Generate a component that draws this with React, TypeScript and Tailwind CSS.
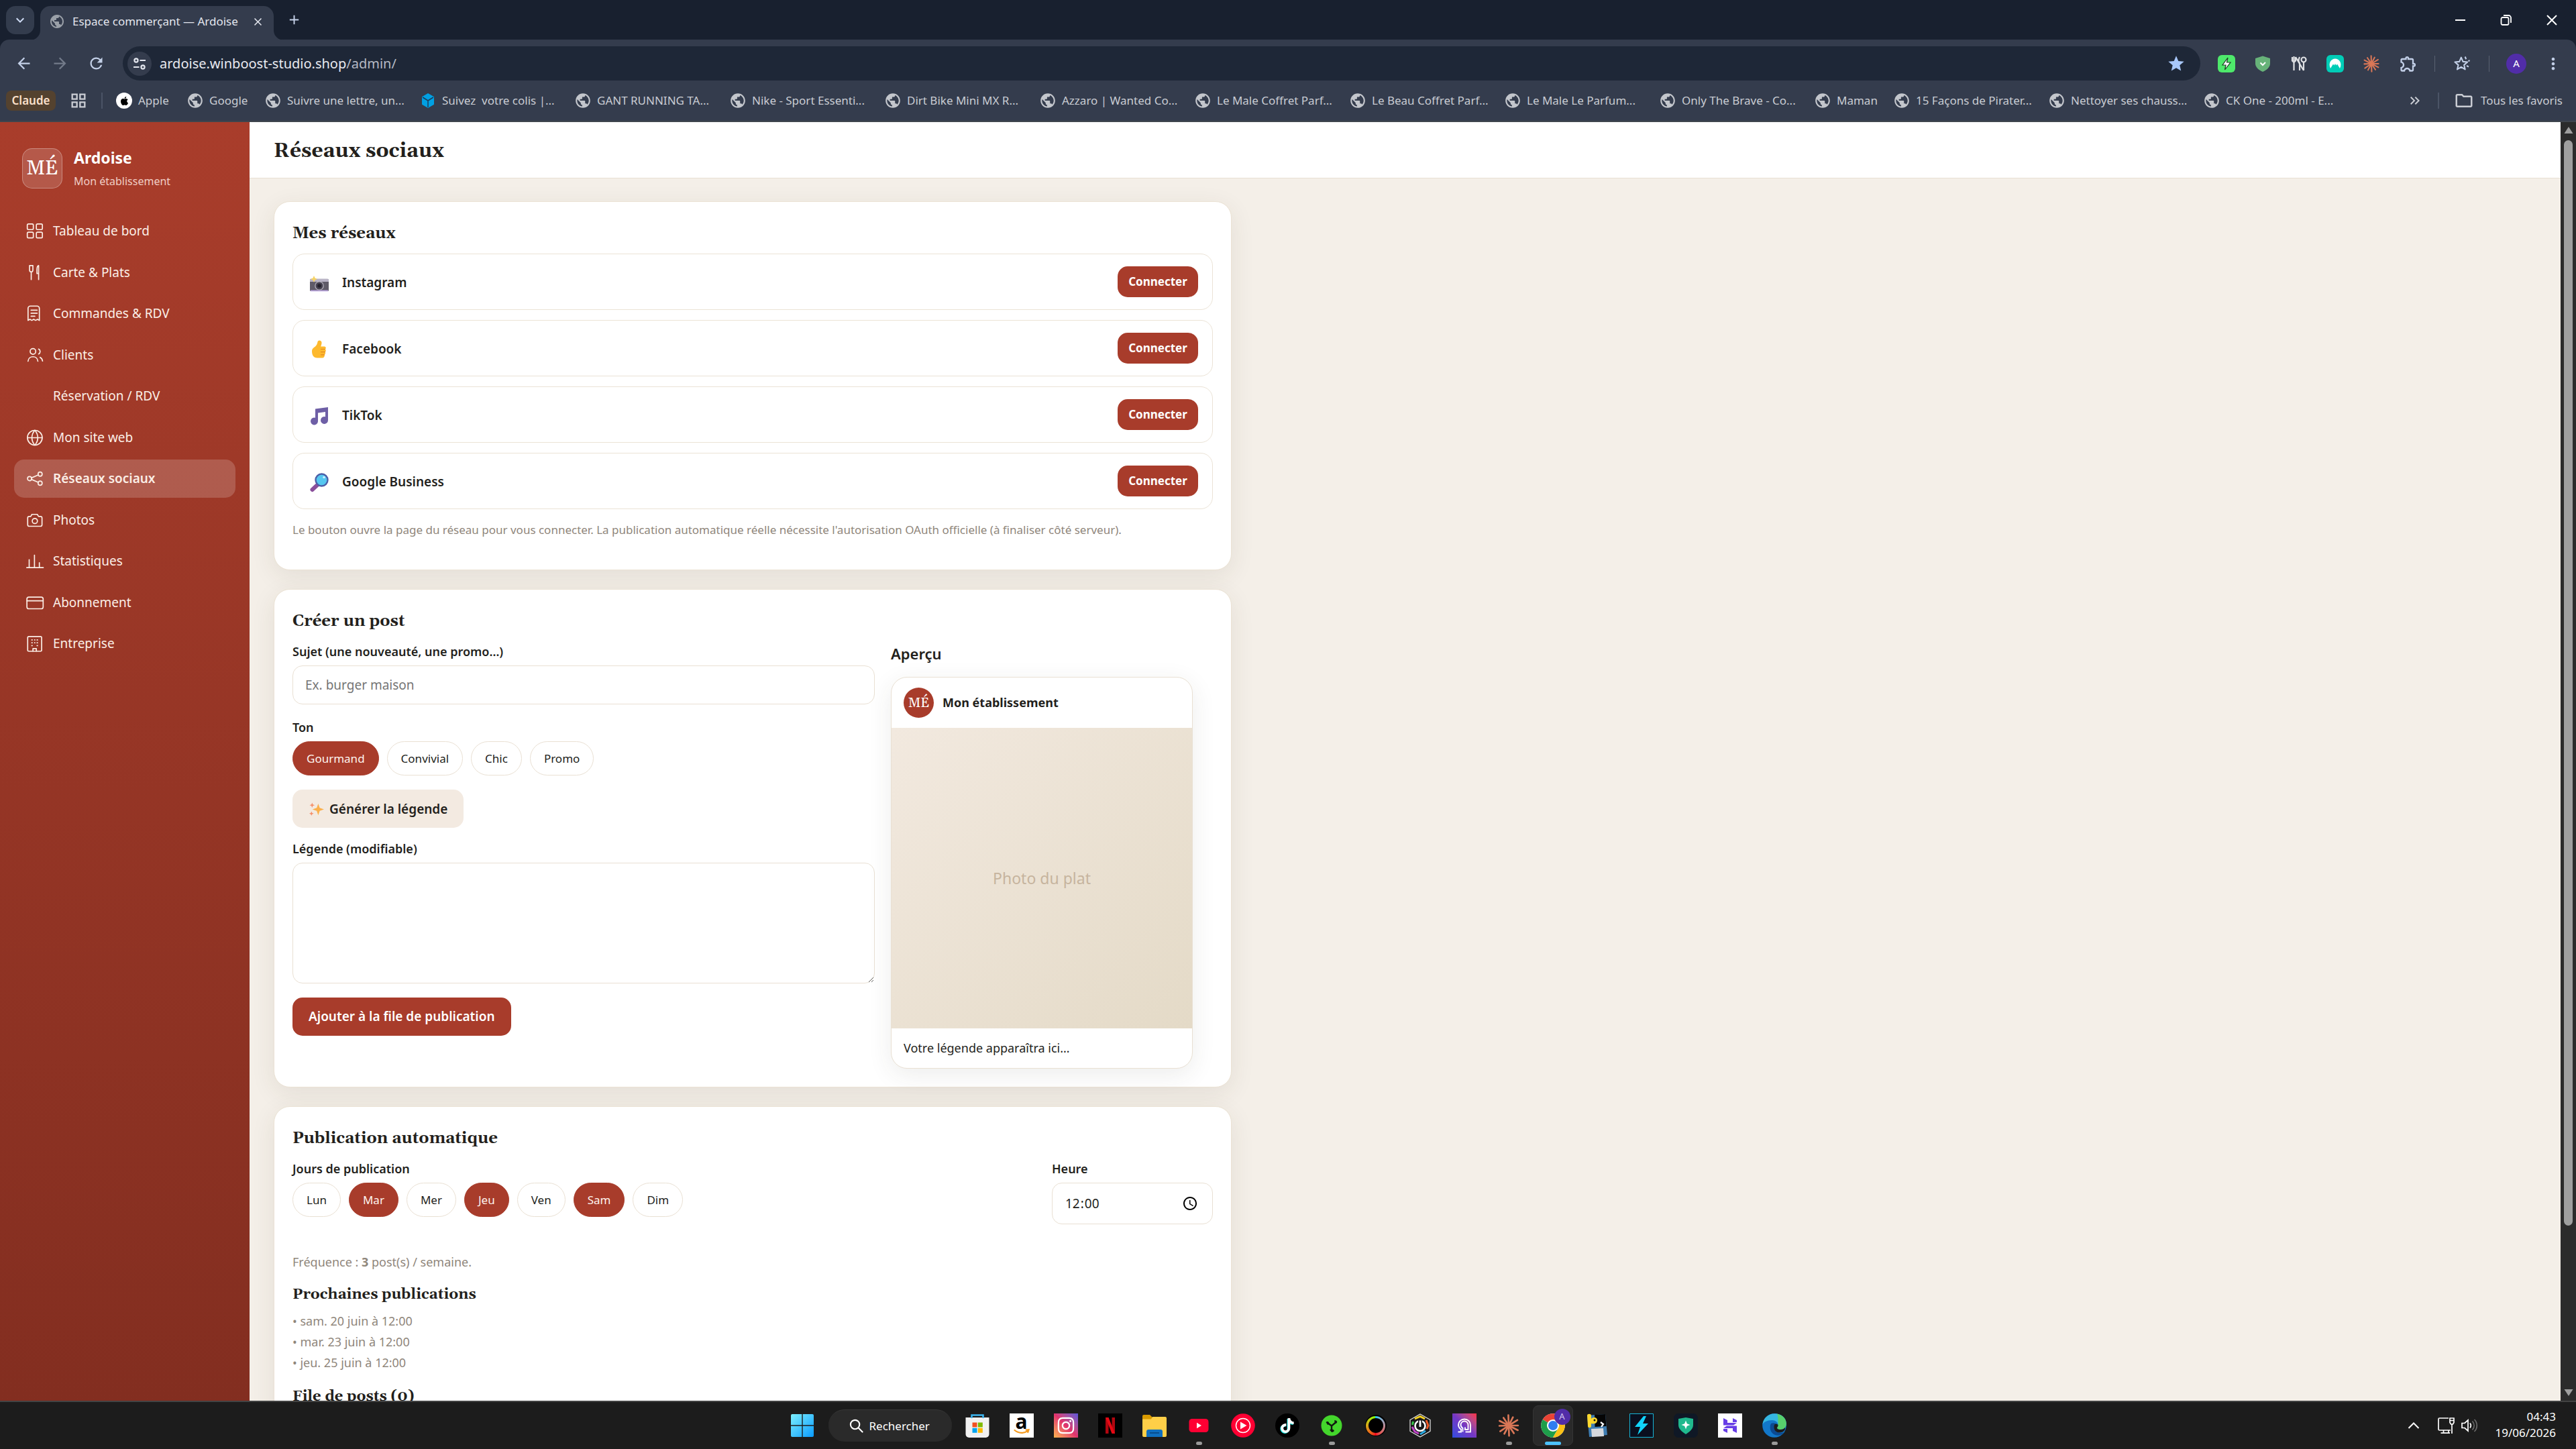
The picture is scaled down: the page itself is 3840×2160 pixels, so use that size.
import type { ReactNode } from "react";
import {
  MdArrowBack, MdArrowForward, MdRefresh, MdStar, MdOutlineExtension, MdMoreVert,
  MdOutlineGridView, MdPublic, MdOutlineFolder, MdKeyboardDoubleArrowRight,
  MdAdd, MdClose, MdKeyboardArrowDown,
} from "react-icons/md";
import { FaApple, FaInstagram, FaTiktok } from "react-icons/fa6";

/* ---------- browser chrome ---------- */

function ClaudeBurst({ className }: { className: string }) {
  const rays = [0, 27, 56, 88, 118, 146, 178, 207, 236, 268, 297, 328];
  return (
    <svg viewBox="0 0 24 24" className={className} fill="none" stroke="currentColor" strokeWidth="1.9" strokeLinecap="round" aria-hidden="true">
      {rays.map((a, i) => {
        const r = i % 2 ? 10.8 : 9.8;
        const t = (a * Math.PI) / 180;
        return <path key={a} d={`M12 12L${(12 + r * Math.cos(t)).toFixed(2)} ${(12 + r * Math.sin(t)).toFixed(2)}`} />;
      })}
    </svg>
  );
}

function TabStrip() {
  return (
    <header className="flex h-[60px] shrink-0 items-end bg-[#18202f] pl-[9px]">
      <button aria-label="Rechercher dans les onglets" className="mb-[9px] flex size-[42px] items-center justify-center rounded-[14px] bg-[#333c4d] text-[#cfdcf5]">
        <MdKeyboardArrowDown size={24} />
      </button>
      <div className="relative ml-[9px] flex h-[51px] w-[348px] items-center rounded-t-[15px] bg-[#343c4d] pr-[14px] pb-[5px] pl-[13px] text-[#e3e6ee]">
        <svg viewBox="0 0 15 15" className="absolute bottom-0 -left-[15px] size-[15px] text-[#343c4d]" fill="currentColor" aria-hidden="true"><path d="M15 0v15H0A15 15 0 0 0 15 0z" /></svg>
        <svg viewBox="0 0 15 15" className="absolute -right-[15px] bottom-0 size-[15px] text-[#343c4d]" fill="currentColor" aria-hidden="true"><path d="M0 0v15h15A15 15 0 0 1 0 0z" /></svg>
        <MdPublic size={24} className="shrink-0 text-[#9aa0a8]" />
        <span className="ml-[11px] flex-1 text-[17px] whitespace-nowrap">Espace commerçant — Ardoise</span>
        <button aria-label="Fermer l'onglet"><MdClose size={19} /></button>
      </div>
      <button aria-label="Nouvel onglet" className="mb-[19px] ml-[19px] text-[#c6d2ea]"><MdAdd size={23} /></button>
      <div className="ml-auto flex h-full items-center gap-[44px] pr-[24px] text-white">
        <button aria-label="Réduire" className="flex h-6 w-6 items-center justify-center"><svg viewBox="0 0 24 24" className="size-6" stroke="currentColor" strokeWidth="2"><path d="M4 12h15" /></svg></button>
        <button aria-label="Niveau inférieur" className="flex h-6 w-6 items-center justify-center"><svg viewBox="0 0 24 24" className="size-6" stroke="currentColor" strokeWidth="1.8" fill="none"><rect x="4.500" y="8" width="11" height="11" rx="2" /><path d="M8 5h7.500a3.500 3.500 0 0 1 3.500 3.500V16" /></svg></button>
        <button aria-label="Fermer" className="flex h-6 w-6 items-center justify-center"><svg viewBox="0 0 24 24" className="size-6" stroke="currentColor" strokeWidth="2"><path d="M5 5l14 14M19 5L5 19" /></svg></button>
      </div>
    </header>
  );
}

function Toolbar() {
  return (
    <div className="-mt-px flex h-[61px] shrink-0 items-end rounded-t-[14px] bg-[#343c4d] pl-[22px] text-[#c3d0e8]">
      <div className="flex h-[51px] items-center gap-[27px]">
        <button aria-label="Retour"><MdArrowBack size={27} /></button>
        <button aria-label="Avancer" className="text-[#737b8a]"><MdArrowForward size={27} /></button>
        <button aria-label="Actualiser"><MdRefresh size={27} /></button>
      </div>
      <form className="ml-[26px] flex h-[51px] flex-1 items-center rounded-full bg-[#1e2737] pr-[22px] pl-[7px]">
        <button type="button" aria-label="Informations sur le site" className="flex size-[36px] items-center justify-center rounded-full bg-[#343c4d] text-[#e3e6ee]">
          <svg viewBox="0 0 24 24" className="size-[24px]" fill="none" stroke="currentColor" strokeWidth="2.200" aria-hidden="true"><circle cx="7" cy="7" r="2.600" /><path d="M12.500 7H21M3 17h8.500" /><circle cx="17" cy="17" r="2.600" /></svg>
        </button>
        <span className="ml-[12px] flex-1 text-[20px] text-[#e8eaf0]">ardoise.winboost-studio.shop<span className="text-[#b4b9c4]">/admin/</span></span>
        <button type="button" aria-label="Modifier ce favori" className="text-[#a8c7fa]"><MdStar size={28} /></button>
      </form>
      <div className="flex h-[51px] items-center pr-[20px] pl-[26px]">
        <div className="flex items-center gap-[28px]">
          <svg viewBox="0 0 26 26" className="size-[26px]" aria-label="Extension énergie"><rect width="26" height="26" rx="6" fill="#4ee96b" /><path d="M15 4l-8 11h5l-1.500 7L19 11h-5.500z" fill="#fff" stroke="#1b3d22" strokeWidth="1.200" /></svg>
          <svg viewBox="0 0 26 26" className="size-[26px]" aria-label="Extension protection"><path d="M13 1.500l11 3.500v7.500c0 6-5 9.700-11 12.500C7 22.200 2 18.500 2 12.500V5z" fill="#67b279" /><path d="M9.500 11.500l3.500 3.500 4-4" fill="none" stroke="#fff" strokeWidth="2" /></svg>
          <svg viewBox="0 0 26 26" className="size-[26px]" fill="none" stroke="#dfe1e4" strokeWidth="2.200" aria-label="Extension outils"><path d="M3 3v5.500l2.500 2.500v12M8 3v5.500L5.500 11M5.500 2v7" /><circle cx="20" cy="7" r="3.500" /><path d="M20 11v12M14 3c-2 4-2 7 0 9v11M8 3l12 20" /></svg>
          <svg viewBox="0 0 26 26" className="size-[26px]" aria-label="Extension VPN"><rect width="26" height="26" rx="6" fill="#00cdb7" /><path d="M6 20C2 12 7 5.500 13 5.500S24 12 20 20l-4-6.500-1.500 2L13 13l-1.500 2.500-1.500-2z" fill="#fff" /></svg>
          <ClaudeBurst className="size-[26px] text-[#d97757]" />
          <MdOutlineExtension size={28} />
        </div>
        <span className="ml-[25px] h-[24px] w-px bg-[#596171]" />
        <svg viewBox="0 0 24 24" className="ml-[26px] size-[28px]" fill="none" stroke="currentColor" strokeWidth="1.800" strokeLinejoin="round" aria-label="Favoris"><path d="M11 4l2.300 5.300 5.700.500-4.300 3.800 1.300 5.600-5-3-5 3 1.300-5.600L3 9.800l5.700-.500zM16 3l1.300 3.200M18 14.500l2.500 1.500M20 8.500l2-.500" /></svg>
        <span className="ml-[26px] h-[24px] w-px bg-[#596171]" />
        <button aria-label="Profil A" className="ml-[25px] flex size-[30px] items-center justify-center rounded-full bg-[#512da8] text-[15px] text-white">A</button>
        <button aria-label="Menu" className="ml-[26px]"><MdMoreVert size={28} /></button>
      </div>
    </div>
  );
}

type Mark = { label: string; width: string; kind?: "apple" | "box" };
const long = "w-[231px]";
const bookmarks: Mark[] = [
  { label: "Apple", width: "w-[106px]", kind: "apple" },
  { label: "Google", width: "w-[116px]" },
  { label: "Suivre une lettre, un...", width: long },
  { label: "Suivez  votre colis |...", width: long, kind: "box" },
  { label: "GANT RUNNING TA...", width: long },
  { label: "Nike - Sport Essenti...", width: long },
  { label: "Dirt Bike Mini MX R...", width: long },
  { label: "Azzaro | Wanted Co...", width: long },
  { label: "Le Male Coffret Parf...", width: long },
  { label: "Le Beau Coffret Parf...", width: long },
  { label: "Le Male Le Parfum...", width: long },
  { label: "Only The Brave - Co...", width: long },
  { label: "Maman", width: "w-[118px]" },
  { label: "15 Façons de Pirater...", width: long },
  { label: "Nettoyer ses chauss...", width: long },
  { label: "CK One - 200ml - E...", width: long },
];

function BookmarkIcon({ kind }: { kind?: Mark["kind"] }) {
  if (kind === "apple")
    return <span className="flex size-[24px] shrink-0 items-center justify-center rounded-full bg-white text-black"><FaApple size={15} /></span>;
  if (kind === "box")
    return (
      <svg viewBox="0 0 24 24" className="size-[24px] shrink-0" aria-hidden="true"><path d="M12 1l9 5.200v11.600L12 23l-9-5.200V6.200z" fill="#00a0e3" /><path d="M4 7l8 5 8-5M12 12v10" fill="none" stroke="#1a3d5c" strokeWidth="1.500" /></svg>
    );
  return <MdPublic size={26} className="-mx-px shrink-0 text-[#c3c6cc]" />;
}

function BookmarksBar() {
  return (
    <nav className="flex h-[62px] shrink-0 items-center border-b-2 border-[#3f454d] bg-[#343c4d] pr-[20px] pl-[9px] text-[17px] whitespace-nowrap text-[#c9ccd3]">
      <a href="#claude" className="flex h-[30px] w-[74px] shrink-0 items-center justify-center rounded-[8px] bg-[#54422f] font-semibold text-[#fbe0cb]">Claude</a>
      <button aria-label="Applications" className="ml-[20px]"><MdOutlineGridView size={28} /></button>
      <span className="mx-[20px] h-[24px] w-[2px] bg-[#4b5466]" />
      {bookmarks.map((b) => (
        <a key={b.label} href="#favori" className={`${b.width} flex shrink-0 items-center gap-[9px] whitespace-pre`}>
          <BookmarkIcon kind={b.kind} />
          {b.label}
        </a>
      ))}
      <span className="flex-1" />
      <button aria-label="Autres favoris"><MdKeyboardDoubleArrowRight size={24} /></button>
      <span className="mx-[22px] h-[24px] w-[2px] bg-[#4b5466]" />
      <a href="#favoris" className="flex items-center gap-[10px]"><MdOutlineFolder size={30} />Tous les favoris</a>
    </nav>
  );
}

/* ---------- sidebar ---------- */

function Glyph({ children }: { children?: ReactNode }) {
  return (
    <svg viewBox="0 0 24 24" className="size-[27px] shrink-0" fill="none" stroke="currentColor" strokeWidth="1.500" strokeLinecap="round" strokeLinejoin="round" aria-hidden="true">
      {children}
    </svg>
  );
}

const navItems: { label: string; glyph?: ReactNode; active?: boolean }[] = [
  { label: "Tableau de bord", glyph: <><rect x="1.500" y="2.500" width="8" height="7.500" rx="1.500" /><rect x="13.500" y="2.500" width="8" height="7.500" rx="1.500" /><rect x="1.500" y="13.500" width="8" height="7.500" rx="1.500" /><rect x="13.500" y="13.500" width="8" height="7.500" rx="1.500" /></> },
  { label: "Carte & Plats", glyph: <path d="M4.500 2.500v6c0 1.500.8 2.500 2.200 2.500s2.200-1 2.200-2.500v-6zM6.700 11V21M16.500 13h-2.200V8c0-3 .7-5 2.200-5.500V21" /> },
  { label: "Commandes & RDV", glyph: <path d="M2.500 21V5a3 3 0 0 1 3-3h9a3 3 0 0 1 3 3v16l-2.500-1.500L12.500 21 10 19.500 7.500 21 5 19.500zM6.500 7.500h8M6.500 11.500h8M6.500 15.500h5" /> },
  { label: "Clients", glyph: <><circle cx="9" cy="7" r="3.700" /><path d="M2.500 20c.3-3.800 3-6 6.500-6s6.200 2.200 6.500 6M16.500 3.800a3.700 3.700 0 0 1 0 6.600M18.500 14.800c1.800.9 3 2.600 3.200 5" /></> },
  { label: "Réservation / RDV" },
  { label: "Mon site web", glyph: <><circle cx="11.500" cy="12" r="9.800" /><path d="M1.700 12h19.600M11.500 2.200c-5.200 5.800-5.200 13.800 0 19.600M11.500 2.200c5.200 5.800 5.200 13.800 0 19.600" /></> },
  { label: "Réseaux sociaux", active: true, glyph: <><circle cx="4.500" cy="12" r="2.700" /><circle cx="18.500" cy="6" r="2.700" /><circle cx="18.500" cy="18" r="2.700" /><path d="M7 11l9-3.900M7 13l9 3.900" /></> },
  { label: "Photos", glyph: <><path d="M2 9a2 2 0 0 1 2-2h2l1.700-2.800h7L16.500 7H19a2 2 0 0 1 2 2v9a2 2 0 0 1-2 2H4a2 2 0 0 1-2-2z" /><circle cx="11.500" cy="13" r="3.400" /></> },
  { label: "Statistiques", glyph: <path d="M.7 20.500h22M4 20V10M11 20V4M17.500 20v-6" /> },
  { label: "Abonnement", glyph: <><rect x="1" y="4.500" width="21.500" height="15.500" rx="2.500" /><path d="M1 9.500h21.500" /></> },
  { label: "Entreprise", glyph: <><rect x="2" y="2.500" width="18.500" height="19.500" rx="1.500" /><path d="M9 22v-3.500h4.500V22M7.500 7H8M14.500 7h.5M7.500 10.800H8M14.500 10.800h.5M7.500 14.600H8M14.500 14.600h.5M11.200 7h.3M11.200 10.800h.3" /></> },
];

function Sidebar() {
  return (
    <aside className="w-[372px] shrink-0 bg-linear-to-b from-[#a93d2b] to-[#832e20] text-[#fbeee6]">
      <div className="flex items-center gap-[17px] px-[33px] pt-[35px]">
        <div className="flex size-[60px] items-center justify-center rounded-[15px] border border-white/30 bg-white/15 font-['Gelasio','DejaVu_Serif_Condensed',serif] text-[30px] text-white">MÉ</div>
        <div>
          <p className="text-[23px] leading-[36px] font-bold text-white">Ardoise</p>
          <p className="pt-[2px] text-[16px] leading-[30px] text-[#f0cdc4]">Mon établissement</p>
        </div>
      </div>
      <nav className="mx-[21px] mt-[31px] flex h-[672px] flex-col justify-between">
        {navItems.map((n) => (
          <a
            key={n.label}
            href="#section"
            aria-current={n.active ? "page" : undefined}
            className={`flex h-[57px] items-center gap-[13px] rounded-[15px] px-[18px] text-[19px] ${n.active ? "bg-white/18 font-semibold" : ""}`}
          >
            <Glyph>{n.glyph}</Glyph>
            {n.label}
          </a>
        ))}
      </nav>
    </aside>
  );
}

/* ---------- page content ---------- */

function Card({ children, className = "" }: { children: ReactNode; className?: string }) {
  return (
    <section className={`rounded-[24px] border border-[#ebe2d4] bg-white p-[27px] shadow-[0_9px_36px_rgba(70,50,30,0.09)] ${className}`}>
      {children}
    </section>
  );
}

function Title({ children }: { children: ReactNode }) {
  return <h2 className="mb-[10px] font-['Gelasio','DejaVu_Serif_Condensed',serif] text-[24px] leading-[40px] font-bold">{children}</h2>;
}

function SubTitle({ children }: { children: ReactNode }) {
  return <h3 className="mt-[15px] mb-[6px] font-['Gelasio','DejaVu_Serif_Condensed',serif] text-[22px] leading-[36px] font-bold">{children}</h3>;
}

const labelClass = "mb-[6px] block text-[18px] leading-[30px] font-semibold";

function Chip({ label, on }: { label: string; on?: boolean }) {
  return (
    <button
      aria-pressed={!!on}
      className={`h-[51px] rounded-full border px-[20px] text-[17px] ${on ? "border-[#a83c2b] bg-[#a83c2b] text-[#fdf3ee]" : "border-[#e9e0d3] bg-white"}`}
    >
      {label}
    </button>
  );
}

const networks: { name: string; art: ReactNode }[] = [
  {
    name: "Instagram",
    art: <><rect x="1" y="9" width="28" height="18" rx="1.500" fill="#5f5b68" /><path d="M1 10a1.500 1.500 0 0 1 1.500-1.500H27a2 2 0 0 1 2 2V13H1z" fill="#b9b4c6" /><rect x="2" y="25.500" width="26" height="1.800" fill="#b9a4dc" /><circle cx="15" cy="19" r="6.800" fill="#b1adb9" /><circle cx="15" cy="19" r="5.500" fill="#45414f" /><circle cx="15" cy="19" r="2.800" fill="#23202b" /><path d="M7 4l1.600 3.400L12 9l-3.400 1.600L7 14l-1.600-3.400L2 9l3.400-1.600z" fill="#f6d365" /></>,
  },
  {
    name: "Facebook",
    art: <><path d="M4 17c0-3 2-4.500 5-6.500 2-1.800 3-4 3.500-7C13 .5 18.500.5 18.500 5c0 2-.7 3.800-1.300 5.500h5.300c2.500 0 3 3.200 1.200 4 1.600 1 1.300 3.500-.2 4 1 1 .7 3.500-.8 4 .6 2.600-.8 5-3.200 5H12c-6 0-8-4.500-8-10.500z" fill="#fdb92e" /><path d="M17.500 14.500h6M17.500 18.700h6M17.500 22.800h5" stroke="#e58a1f" strokeWidth="1.200" strokeLinecap="round" /></>,
  },
  {
    name: "TikTok",
    art: <path d="M9 4.500L28 2v19.500a5.500 5.500 0 1 1-4-5.300V9l-11 1.500V23a5.500 5.500 0 1 1-4-5.300z" fill="#6e5fa6" />,
  },
  {
    name: "Google Business",
    art: <><path d="M12.500 18.500L4.500 26" stroke="#8a4f9b" strokeWidth="6" strokeLinecap="round" /><circle cx="18.500" cy="11.500" r="9" fill="#55c7f0" stroke="#4c5fa8" strokeWidth="2.400" /><circle cx="22" cy="7.500" r="1.800" fill="#c9f0ff" /></>,
  },
];

function NetworksCard() {
  return (
    <Card className="pb-[46px]">
      <Title>Mes réseaux</Title>
      <ul className="flex flex-col gap-[15px]">
        {networks.map((n) => (
          <li key={n.name} className="flex h-[84px] items-center rounded-[18px] border border-[#ebe3d6] pr-[21px] pl-[24px] text-[19px] font-semibold">
            <svg viewBox="0 0 30 30" className="mt-[4px] size-[30px]" fill="none" aria-hidden="true">{n.art}</svg>
            <span className="ml-[19px] flex-1 pt-[2px]">{n.name}</span>
            <button className="h-[46px] w-[120px] rounded-[15px] bg-[#a83c2b] text-[17px] font-bold text-white">Connecter</button>
          </li>
        ))}
      </ul>
      <p className="mt-[18px] text-[17px] leading-[26px] text-[#8f867b]">
        Le bouton ouvre la page du réseau pour vous connecter. La publication automatique réelle nécessite l'autorisation OAuth officielle (à finaliser côté serveur).
      </p>
    </Card>
  );
}

function ComposerCard() {
  return (
    <Card>
      <Title>Créer un post</Title>
      <div className="grid grid-cols-[1fr_480px] gap-[24px]">
        <div>
          <label htmlFor="sujet" className={labelClass}>Sujet (une nouveauté, une promo…)</label>
          <input id="sujet" placeholder="Ex. burger maison" className="h-[58px] w-full rounded-[15px] border border-[#e9e0d3] px-[18px] text-[19px] placeholder:text-[#757575]" />
          <p className={`${labelClass} mt-[19px]`}>Ton</p>
          <div className="flex gap-[12px]">
            <Chip label="Gourmand" on />
            <Chip label="Convivial" />
            <Chip label="Chic" />
            <Chip label="Promo" />
          </div>
          <button className="mt-[21px] flex h-[57px] items-center gap-[8px] rounded-[15px] bg-[#f3eae1] px-[24px] pt-[2px] text-[19px] font-semibold">
            <svg viewBox="0 0 24 24" className="size-[23px]" aria-hidden="true">
              <path d="M15 3l2.300 6.700L24 12l-6.700 2.300L15 21l-2.300-6.700L6 12l6.700-2.300z" fill="#fbb04c" />
              <path d="M5.500 1.500l1.100 2.900L9.500 5.500 6.600 6.600 5.500 9.500 4.400 6.600 1.500 5.500l2.900-1.100zM4.500 15l1 2.500L8 18.500l-2.500 1-1 2.500-1-2.500L1 18.500l2.500-1z" fill="#f58f6a" />
            </svg>
            Générer la légende
          </button>
          <label htmlFor="legende" className={`${labelClass} mt-[16px]`}>Légende (modifiable)</label>
          <textarea id="legende" className="block h-[180px] w-full rounded-[15px] border border-[#e9e0d3] px-[18px] py-[14px] text-[19px]" />
          <button className="mt-[21px] h-[57px] rounded-[15px] bg-[#a83c2b] px-[24px] text-[19px] font-semibold text-white">Ajouter à la file de publication</button>
        </div>
        <div>
          <h3 className="mb-[17px] text-[22px] leading-[36px] font-semibold">Aperçu</h3>
          <article className="max-w-[450px] overflow-hidden rounded-[24px] border border-[#e9e0d3] bg-white shadow-[0_9px_36px_rgba(60,50,40,0.09)]">
            <div className="flex h-[75px] items-center gap-[13px] px-[18px]">
              <span className="flex size-[45px] items-center justify-center rounded-full bg-[#a83c2b] font-['Gelasio','DejaVu_Serif_Condensed',serif] text-[20px] text-white">MÉ</span>
              <strong className="text-[18px] font-bold">Mon établissement</strong>
            </div>
            <div className="flex aspect-square items-center justify-center bg-linear-to-br from-[#f2e9df] to-[#e4dac7] text-[23px] text-[#c6b49e]">Photo du plat</div>
            <p className="px-[18px] py-[14px] text-[18px] leading-[31px]">Votre légende apparaîtra ici…</p>
          </article>
        </div>
      </div>
    </Card>
  );
}

const days: [string, boolean][] = [["Lun", false], ["Mar", true], ["Mer", false], ["Jeu", true], ["Ven", false], ["Sam", true], ["Dim", false]];

function ScheduleCard() {
  return (
    <Card>
      <Title>Publication automatique</Title>
      <div className="flex justify-between">
        <div>
          <p className={labelClass}>Jours de publication</p>
          <div className="flex gap-[12px]">
            {days.map(([d, on]) => <Chip key={d} label={d} on={on} />)}
          </div>
        </div>
        <div className="w-[240px]">
          <label htmlFor="heure" className={labelClass}>Heure</label>
          <input
            id="heure"
            type="time"
            defaultValue="12:00"
            className="h-[62px] w-full rounded-[15px] border border-[#e9e0d3] pr-[21px] pl-[18px] text-[19px] [&::-webkit-calendar-picker-indicator]:size-[24px] [&::-webkit-calendar-picker-indicator]:p-0 [&::-webkit-datetime-edit-ampm-field]:hidden"
          />
        </div>
      </div>
      <p className="mt-[40px] text-[18px] leading-[32px] text-[#8f867b]">Fréquence : <b>3</b> post(s) / semaine.</p>
      <SubTitle>Prochaines publications</SubTitle>
      <ul className="mb-[17px] text-[18px] leading-[31px] text-[#8f867b]">
        <li>• sam. 20 juin à 12:00</li>
        <li>• mar. 23 juin à 12:00</li>
        <li>• jeu. 25 juin à 12:00</li>
      </ul>
      <SubTitle>File de posts (0)</SubTitle>
    </Card>
  );
}

function PageScrollbar() {
  return (
    <div className="flex w-[23px] shrink-0 flex-col items-center bg-[#2b2b2b] py-[5px] text-[#9f9f9f]" aria-hidden="true">
      <svg viewBox="0 0 14 14" className="size-[14px] shrink-0" fill="currentColor"><path d="M7 2l6.500 10h-13z" /></svg>
      <div className="mt-[8px] h-[1618px] w-[13px] rounded-full bg-[#9f9f9f]" />
      <span className="flex-1" />
      <svg viewBox="0 0 14 14" className="size-[14px] shrink-0" fill="currentColor"><path d="M7 12l6.500-10h-13z" /></svg>
    </div>
  );
}

/* ---------- taskbar ---------- */

type Task = { name: string; art: ReactNode; mark?: "dot" | "active" };

function Art({ children }: { children: ReactNode }) {
  return <svg viewBox="0 0 36 36" className="size-[36px]" fill="none" aria-hidden="true">{children}</svg>;
}

const tasks: Task[] = [
  { name: "Microsoft Store", art: <Art><path d="M.5 6h35v25a5 5 0 0 1-5 5h-25a5 5 0 0 1-5-5z" fill="#f1f1f1" /><path d="M9.500 7V2.500h17V7" stroke="#3cb5f0" strokeWidth="2.500" /><path fill="#f25022" d="M10.500 13.500h7v7h-7z" /><path fill="#7fba00" d="M18.800 13.500h7v7h-7z" /><path fill="#00a4ef" d="M10.500 21.800h7v7h-7z" /><path fill="#ffb900" d="M18.800 21.800h7v7h-7z" /></Art> },
  { name: "Amazon", art: (
    <span className="flex size-[36px] flex-col items-center bg-white text-black">
      <span className="font-['Open_Sans',sans-serif] text-[30px] leading-[23px] font-bold">a</span>
      <svg viewBox="0 0 24 8" className="h-[8px] w-[24px]" fill="none" stroke="#f59a1e" strokeWidth="2.200" strokeLinecap="round" aria-hidden="true"><path d="M1.500 2c6 5 14 5 19.500.8M18.500 1.500l4-.3-1.200 3.800" /></svg>
    </span>
  ) },
  { name: "Instagram", art: <span className="flex size-[36px] items-center justify-center bg-linear-to-tr from-[#fdb44b] via-[#e1306c] to-[#5851db] text-white"><FaInstagram size={28} /></span> },
  { name: "Netflix", art: <Art><path fill="#000" d="M0 0h36v36H0z" /><path fill="#b1060f" d="M11 6h4.500v24H11zM20.500 6H25v24h-4.500z" /><path fill="#e50914" d="M11 6h4.500L25 30h-4.500z" /></Art> },
  { name: "Explorateur de fichiers", art: <Art><path fill="#d99a00" d="M0 4a2 2 0 0 1 2-2h9l4 4v4H0z" /><path fill="#ffcf48" d="M0 8.500h13l2-3.500h19a2 2 0 0 1 2 2v26a2 2 0 0 1-2 2H2a2 2 0 0 1-2-2z" /><path fill="#0f6fc0" d="M6 35V27a3 3 0 0 1 3-3h18a3 3 0 0 1 3 3v8z" /><path stroke="#07427c" strokeWidth="1.500" d="M11 29h14" /></Art> },
  { name: "YouTube", mark: "dot", art: <Art><rect x="3.500" y="8" width="29" height="20" rx="4.500" fill="#ff0033" /><path fill="#fff" d="M15 13.800v8.400l7-4.200z" /></Art> },
  { name: "YouTube Music", art: <Art><circle cx="18" cy="18" r="17.800" fill="#ff0033" /><circle cx="18" cy="18" r="10.500" stroke="#fff" strokeWidth="1.500" /><path fill="#fff" d="M14 12.500v11l9.500-5.500z" /></Art> },
  { name: "TikTok", art: <span className="flex size-[36px] items-center justify-center rounded-full bg-black text-white"><FaTiktok size={22} className="drop-shadow-[-1px_1px_0_#25f4ee]" /></span> },
  { name: "Razer", mark: "dot", art: <Art><circle cx="18" cy="18" r="15.500" fill="#44d62c" /><path d="M18 18.500L12 14M18 18.500l6-5M18 18.500v6.500" stroke="#101a10" strokeWidth="2.400" strokeLinecap="round" /><path d="M9.500 13c1.500-1.500 4-1 4.500.5s-.5 3.500-2 3.500M22 10.500c2-.8 4 .2 4.200 2s-1.600 2.700-3.200 2.200M15 24.500c2-1.200 4-1.200 6 0s0 3.500-3 3.500" fill="#101a10" /></Art> },
  { name: "Anneau", art: <span className="flex size-[32px] items-center justify-center rounded-full bg-black"><span className="flex size-[29px] items-center justify-center rounded-full bg-conic from-[#00c8ff] via-[#f0001c] to-[#7dff00]"><span className="size-[22px] rounded-full bg-black" /></span></span> },
  { name: "Alimentation RGB", art: <Art><path d="M18 1l15 8.500v17L18 35 3 26.500v-17z" fill="#181818" stroke="#e8e8e8" strokeWidth="1.200" /><path d="M10 8l8-3.500L25 8" stroke="#f2d022" strokeWidth="3" /><path d="M27 10l3 8-2 5" stroke="#f05a28" strokeWidth="3" /><path d="M26 26l-8 5" stroke="#29a9e1" strokeWidth="3" /><path d="M6 20l4 7 6 3" stroke="#c043c8" strokeWidth="3" /><path d="M6.500 17l1-5" stroke="#37c84a" strokeWidth="3" /><circle cx="18" cy="18.500" r="7.500" stroke="#fff" strokeWidth="2.600" /><path d="M18 8.500v12" stroke="#181818" strokeWidth="6" /><path d="M18 10.500V20" stroke="#fff" strokeWidth="2.800" /></Art> },
  { name: "Profil", art: <span className="flex size-[36px] items-center justify-center bg-linear-to-tr from-[#2b4de0] via-[#7436c4] to-[#ff2a3a]"><svg viewBox="0 0 24 24" className="size-[24px]" fill="none" stroke="#fff" strokeWidth="1.900" aria-hidden="true"><path d="M2.500 21.500H7v-3.800C4.500 16 3 13.500 3 11a9 8.500 0 0 1 18 0v10.500h-7.500" /><path d="M9.500 21.500V16C7.500 14.800 6.500 13 6.500 11a5.500 5.500 0 0 1 11 0v7h-4.500v-3.500" /></svg></span> },
  { name: "Claude", mark: "dot", art: <ClaudeBurst className="size-[34px] text-[#d97757]" /> },
  { name: "Google Chrome", mark: "active", art: (
    <span className="relative">
      <Art><circle cx="18" cy="18" r="17.800" fill="#fff" /><path d="M18 18L2.600 9.100A17.800 17.800 0 0 1 33.400 9.100z" fill="#ea4335" /><path d="M2.600 9.100A17.800 17.800 0 0 0 18 35.800L25.700 22.500 18 18z" fill="#1e9e4a" /><path d="M33.400 9.100A17.800 17.800 0 0 1 18 35.800L25.700 22.500 18 9.100z" fill="#fbc116" /><circle cx="18" cy="18" r="9" fill="#fff" /><circle cx="18" cy="18" r="7" fill="#2f7df0" /></Art>
      <span className="absolute -top-[7px] -right-[8px] flex size-[24px] items-center justify-center rounded-full bg-[#512da8] text-[13px] text-[#d8ccf2]">A</span>
    </span>
  ) },
  { name: "PuTTY", art: <Art><path d="M3 3l27-2 3 31-27 3z" fill="#3e7cb1" /><path d="M14 2l16-1 1.500 18-17 1z" fill="#050505" /><path d="M9 23l18-1 1 12-18 1z" fill="#d6d9de" /><path d="M3 3c0-3 6-3 6 0v5c2-3 9-3 9 2s-5 6-9 5v4c0 3-5 3-5 0z" fill="#ffd92e" /><circle cx="14" cy="10" r="1.500" fill="#111" /><path d="M23 13l4 3-3 4" stroke="#fff" strokeWidth="2.200" /></Art> },
  { name: "Éclair", art: <Art><path d="M.5.500h35v35H.500z" fill="#0a0f1f" stroke="#16b4d8" /><path d="M21 4L8 20h8l-4 12 16-17h-8l5-11z" fill="#11d3fb" /></Art> },
  { name: "Protection", art: <Art><rect width="36" height="36" rx="7" fill="#0f1826" /><path d="M7 8l11-2 11 2v9c0 6-5 10-11 14C12 27 7 23 7 17z" fill="#20b98e" /><path d="M18 10.500l1.800 4.700 4.700 1.800-4.700 1.800L18 23.500l-1.800-4.700-4.700-1.800 4.700-1.800z" fill="#fff" /></Art> },
  { name: "Hostinger", art: <Art><path d="M0 0h36v36H0z" fill="#fff" /><path d="M8 7l6 3v4h14l-5 3.500H8zM22 7l6 3v3h-6zM28 29l-6-3v-4H8l5-3.500h15zM14 29l-6-3v-3h6z" fill="#673de6" /></Art> },
  { name: "Microsoft Edge", mark: "dot", art: <Art><circle cx="18" cy="18" r="17.800" fill="#1277c9" /><path d="M.5 17C1 7 9 .200 18.500.200 29 .200 35.800 7 35.800 15c0 6-4 9-8.500 9-4 0-5.300-1.500-5.300-2.500s1.500-1.500 1.500-4.500c0-4-4-7-9-7C7 10 1.500 13 .500 17z" fill="#35b6e0" /><path d="M22 .700C31 2.500 35.800 8.500 35.800 15c0 6-4 9-8.500 9-4 0-5.300-1.500-5.300-2.500s1.500-1.500 1.500-4.500C23.500 11 24 5 22 .700z" fill="#58d06c" /><path d="M13 15c-3 6-1 14 6 17 5 2 10 0 14.500-4-3 1-12 2.500-15-3.500-1.500-3.500-.5-7 1.500-9.500-2-1-5-1-7 0z" fill="#0b4a92" /><path d="M18 17c1-2 4-2 5.500 0 .3 3-1.500 3.500-1.500 4.500s1.300 2.500 5.300 2.500c3 0 5-1 6.700-3 .5 3-1 5-3.500 6.500-5 2-11 1-12.500-4-.7-2.500-.7-4.500 0-6.500z" fill="#1d1d1d" /></Art> },
];

function Taskbar() {
  return (
    <footer className="grid h-[72px] shrink-0 grid-cols-[1fr_auto_1fr] items-center border-t-2 border-[#434343] bg-[#1c1c1c] text-white">
      <span />
      <div className="flex items-center">
        <button aria-label="Démarrer" className="flex w-[66px] justify-center">
          <svg viewBox="0 0 36 36" className="size-[36px]" aria-hidden="true">
            <defs><linearGradient id="win" x1="0" y1="0" x2="1" y2="1"><stop stopColor="#7df0ff" /><stop offset="1" stopColor="#0a9bff" /></linearGradient></defs>
            <path fill="url(#win)" d="M1 3a2 2 0 0 1 2-2h14.300v16.300H1zM18.700 1H33a2 2 0 0 1 2 2v14.300H18.700zM1 18.700h16.300V35H3a2 2 0 0 1-2-2zM18.700 18.700H35V33a2 2 0 0 1-2 2H18.700z" />
          </svg>
        </button>
        <button className="mr-[5px] ml-[6px] flex h-[48px] w-[184px] items-center gap-[9px] rounded-full border-t border-[#383838] bg-[#2a2a2a] pl-[31px] text-[17px]">
          <svg viewBox="0 0 22 22" className="size-[21px]" fill="none" stroke="currentColor" strokeWidth="2.200" strokeLinecap="round" aria-hidden="true"><circle cx="9" cy="9" r="7" /><path d="M14.500 14.500l6 6" /></svg>
          Rechercher
        </button>
        {tasks.map((t) => (
          <button key={t.name} aria-label={t.name} className="relative flex h-[60px] w-[66px] items-center justify-center">
            {t.mark === "active" && <span className="absolute inset-y-0 left-[3px] w-[60px] rounded-[8px] border border-[#353535] bg-[#2a2a2a]" />}
            <span className="relative">{t.art}</span>
            {t.mark === "dot" && <span className="absolute bottom-px left-[29px] h-[5px] w-[9px] rounded-full bg-[#9a9a9a]" />}
            {t.mark === "active" && <span className="absolute bottom-px left-[21px] h-[5px] w-[24px] rounded-full bg-[#4cc2ff]" />}
          </button>
        ))}
      </div>
      <div className="flex items-center justify-end pr-[30px]">
        <svg viewBox="0 0 18 12" className="h-[12px] w-[18px]" fill="none" stroke="currentColor" strokeWidth="2" aria-label="Icônes cachées"><path d="M1.500 10L9 2.500l7.500 7.500" /></svg>
        <svg viewBox="0 0 26 26" className="ml-[26px] size-[26px]" fill="none" stroke="currentColor" strokeWidth="1.700" aria-label="Réseau"><path d="M17 2H3.500A1.500 1.500 0 0 0 2 3.500v15A1.500 1.500 0 0 0 3.500 20H20M9.500 20v4M17 20v4M5.500 24.200H19M19 2h6v6.500l-1.500 2.500h-3L19 8.500zM19 5.500h6M22 11v14" /></svg>
        <svg viewBox="0 0 26 26" className="ml-[9px] size-[26px]" fill="none" stroke="currentColor" strokeWidth="1.700" aria-label="Volume"><path d="M2 9.500v7h4l5 4.500V5L6 9.500zM14 9.500c1.500 2 1.500 5 0 7" /><path d="M17.500 6.500c3.500 4 3.500 9 0 13M20.500 4c5 5 5 13 0 18" stroke="#6b6b6b" /></svg>
        <p className="ml-[26px] pb-[2px] text-right text-[17px] leading-[24px]">04:43<br />19/06/2026</p>
      </div>
    </footer>
  );
}

export default function App() {
  return (
    <div className="flex h-screen flex-col overflow-hidden bg-[#18202f] font-['Noto_Sans','Open_Sans',sans-serif] text-[#231f1c]">
      <TabStrip />
      <Toolbar />
      <BookmarksBar />
      <div className="flex min-h-0 flex-1">
        <Sidebar />
        <main className="flex min-w-0 flex-1 flex-col overflow-hidden bg-[#f4efe8]">
          <div className="flex h-[84px] shrink-0 items-center border-b border-[#e8dfd2] bg-white px-[36px] pt-[4px]">
            <h1 className="font-['Gelasio','DejaVu_Serif_Condensed',serif] text-[30px] font-bold">Réseaux sociaux</h1>
          </div>
          <div className="flex max-w-[1500px] flex-col gap-[28px] px-[36px] pt-[34px]">
            <NetworksCard />
            <ComposerCard />
            <ScheduleCard />
          </div>
        </main>
        <PageScrollbar />
      </div>
      <Taskbar />
    </div>
  );
}
